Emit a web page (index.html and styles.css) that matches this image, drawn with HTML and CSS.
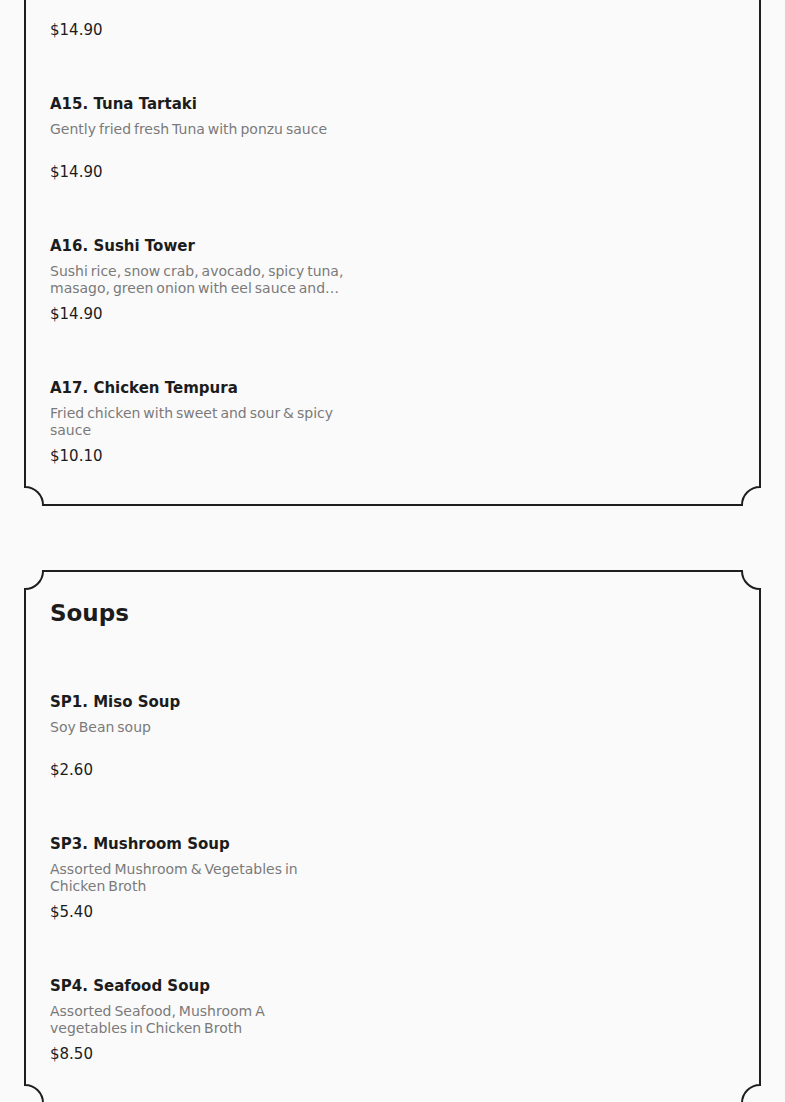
FILE: index.html
```
<!DOCTYPE html>
<html lang="en">
<head>
<meta charset="utf-8">
<title>Menu</title>
<link rel="stylesheet" href="styles.css">
</head>
<body>
<main class="menu">
  <section class="menu-card menu-card--continued">
    <div class="item-list">
      <div class="item item--cut">
        <div class="item__price">$14.90</div>
      </div>
      <div class="item">
        <h3 class="item__title">A15. Tuna Tartaki</h3>
        <p class="item__desc">Gently fried fresh Tuna with ponzu sauce</p>
        <div class="item__price">$14.90</div>
      </div>
      <div class="item">
        <h3 class="item__title">A16. Sushi Tower</h3>
        <p class="item__desc">Sushi rice, snow crab, avocado, spicy tuna, masago, green onion with eel sauce and spicy mayo on top</p>
        <div class="item__price">$14.90</div>
      </div>
      <div class="item">
        <h3 class="item__title">A17. Chicken Tempura</h3>
        <p class="item__desc">Fried chicken with sweet and sour &amp; spicy sauce</p>
        <div class="item__price">$10.10</div>
      </div>
    </div>
    <span class="corner corner--bl"><svg viewBox="0 0 20 20" width="20" height="20"><path d="M1 0 V1 A18 18 0 0 1 19 19 H20" /></svg></span>
    <span class="corner corner--br"><svg viewBox="0 0 20 20" width="20" height="20"><path d="M1 0 V1 A18 18 0 0 1 19 19 H20" /></svg></span>
  </section>

  <section class="menu-card">
    <h2 class="menu-card__heading">Soups</h2>
    <div class="item-list">
      <div class="item">
        <h3 class="item__title">SP1. Miso Soup</h3>
        <p class="item__desc">Soy Bean soup</p>
        <div class="item__price">$2.60</div>
      </div>
      <div class="item">
        <h3 class="item__title">SP3. Mushroom Soup</h3>
        <p class="item__desc">Assorted Mushroom &amp; Vegetables in Chicken Broth</p>
        <div class="item__price">$5.40</div>
      </div>
      <div class="item">
        <h3 class="item__title">SP4. Seafood Soup</h3>
        <p class="item__desc">Assorted Seafood, Mushroom A vegetables in Chicken Broth</p>
        <div class="item__price">$8.50</div>
      </div>
    </div>
    <span class="corner corner--tl"><svg viewBox="0 0 20 20" width="20" height="20"><path d="M1 0 V1 A18 18 0 0 1 19 19 H20" /></svg></span>
    <span class="corner corner--tr"><svg viewBox="0 0 20 20" width="20" height="20"><path d="M1 0 V1 A18 18 0 0 1 19 19 H20" /></svg></span>
    <span class="corner corner--bl"><svg viewBox="0 0 20 20" width="20" height="20"><path d="M1 0 V1 A18 18 0 0 1 19 19 H20" /></svg></span>
    <span class="corner corner--br"><svg viewBox="0 0 20 20" width="20" height="20"><path d="M1 0 V1 A18 18 0 0 1 19 19 H20" /></svg></span>
  </section>
</main>
</body>
</html>
```
FILE: styles.css
```
* {
  box-sizing: border-box;
}

html,
body {
  margin: 0;
  padding: 0;
  background: #fafafa;
}

body {
  font-family: "DejaVu Sans", "Noto Sans", sans-serif;
  color: #1c1c1c;
}

.menu {
  display: flex;
  flex-direction: column;
  gap: 64px;
  padding: 0 24px 40px;
}

.menu-card {
  position: relative;
  border: 2px solid #1e1e1e;
  padding: 24px 24px 38px;
}

.menu-card--continued {
  border-top: none;
  padding-top: 20px;
}

.menu-card__heading {
  margin: 0 0 62px;
  font-size: 23px;
  line-height: 34px;
  font-weight: 700;
  color: #1c1c1c;
}

.item-list {
  display: flex;
  flex-direction: column;
  gap: 54px;
}

.item {
  display: flex;
  flex-direction: column;
  width: 300px;
}

.item__title {
  margin: 0;
  font-size: 15px;
  line-height: 20px;
  font-weight: 700;
  color: #1c1c1c;
}

.item__desc {
  margin: 7px 0 0;
  width: 294px;
  height: 34px;
  font-size: 14px;
  line-height: 17px;
  word-spacing: -1.5px;
  color: #7a7a7a;
  display: -webkit-box;
  -webkit-box-orient: vertical;
  -webkit-line-clamp: 2;
  overflow: hidden;
}

.item__price {
  margin-top: 7px;
  font-size: 15px;
  line-height: 20px;
  color: #1c1c1c;
}

.item--cut .item__price {
  margin-top: 0;
}

.corner {
  position: absolute;
  width: 20px;
  height: 20px;
  background: #fafafa;
  display: block;
}

.corner svg {
  display: block;
  fill: none;
  stroke: #1e1e1e;
  stroke-width: 2;
}

.corner--bl {
  left: -2px;
  bottom: -2px;
}

.corner--br {
  right: -2px;
  bottom: -2px;
  transform: scaleX(-1);
}

.corner--tl {
  left: -2px;
  top: -2px;
  transform: scaleY(-1);
}

.corner--tr {
  right: -2px;
  top: -2px;
  transform: scale(-1, -1);
}
```
